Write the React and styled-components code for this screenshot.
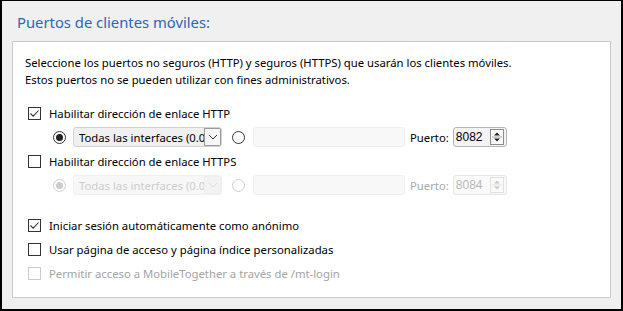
import React from "react";
import styled, { createGlobalStyle } from "styled-components";

const Global = createGlobalStyle`
  html, body { margin: 0; padding: 0; background: #f0f0f0; }
  body { font-family: "Noto Sans", "Open Sans", sans-serif; }
  * { box-sizing: border-box; }
`;

const Frame = styled.div`
  width: 623px;
  height: 311px;
  border: 2px solid #000;
  border-top-width: 1px;
  background: #f0f0f0;
  display: flex;
  flex-direction: column;
  padding: 0 10px 0 10px;
`;

const Title = styled.h1`
  margin: 0;
  padding: 10px 0 0 5px;
  height: 40px;
  font-size: 14.8px;
  font-weight: 400;
  color: #2a68b1;
  line-height: 22px;
`;

const Panel = styled.div`
  height: 257px;
  background: #fff;
  border: 1px solid #c9c9c9;
  padding: 12px 0 0 15px;
  display: flex;
  flex-direction: column;
  font-size: 11.3px;
  color: #000;
`;

const Desc = styled.p`
  margin: 0 0 13px -3px;
  line-height: 17px;
`;

const Row = styled.div`
  height: 24px;
  display: flex;
  align-items: center;
  padding-left: ${(p) => p.$indent || 0}px;
  margin-top: ${(p) => p.$gapTop || 0}px;
  color: ${(p) => (p.$disabled ? "#a3a3a3" : "#000")};
`;

const Box = styled.span`
  width: 13px;
  height: 13px;
  border: 1px solid ${(p) => (p.$disabled ? "#cccccc" : "#333")};
  background: #fff;
  display: inline-flex;
  align-items: center;
  justify-content: center;
  margin-right: 8px;
  flex: none;
`;

const Check = ({ checked, disabled }) => (
  <Box $disabled={disabled}>
    {checked && (
      <svg width="11" height="11" viewBox="0 0 11 11">
        <path d="M1.5 5.5 L4.2 8.2 L9.5 2.5" fill="none" stroke={disabled ? "#bbb" : "#333"} strokeWidth="1.1" />
      </svg>
    )}
  </Box>
);

const RadioRing = styled.span`
  width: 13px;
  height: 13px;
  border-radius: 50%;
  border: 1px solid ${(p) => (p.$disabled ? "#cfcfcf" : "#333")};
  background: #fff;
  display: inline-flex;
  align-items: center;
  justify-content: center;
  flex: none;
  margin-right: ${(p) => p.$mr}px;
`;

const Dot = styled.span`
  width: 7px;
  height: 7px;
  border-radius: 50%;
  background: ${(p) => (p.$disabled ? "#cccccc" : "#222")};
`;

const Radio = ({ checked, disabled, mr }) => (
  <RadioRing $disabled={disabled} $mr={mr}>
    {checked && <Dot $disabled={disabled} />}
  </RadioRing>
);

const Combo = styled.div`
  width: 149px;
  height: 20px;
  border: 1px solid ${(p) => (p.$disabled ? "#f0f0f0" : "#d2d2d2")};
  border-radius: 3px;
  background: ${(p) => (p.$disabled ? "#f7f7f7" : "#f0f0f0")};
  display: flex;
  align-items: center;
  margin-right: 10px;
  overflow: hidden;
  flex: none;
`;

const ComboText = styled.span`
  flex: 1;
  min-width: 0;
  padding-left: 5px;
  white-space: nowrap;
  overflow: hidden;
  color: ${(p) => (p.$disabled ? "#cdcdcd" : "#000")};
`;

const DropBtn = styled.span`
  width: 17px;
  height: 18px;
  flex: none;
  display: flex;
  align-items: center;
  justify-content: center;
  border: 1px solid ${(p) => (p.$disabled ? "#efefef" : "#9a9a9a")};
  background: ${(p) => (p.$disabled ? "#f3f3f3" : "#f6f6f6")};
`;

const TextInput = styled.div`
  width: 152px;
  height: 20px;
  border: 1px solid #f0f0f0;
  border-radius: 3px;
  background: #f8f8f8;
  margin-right: 5px;
  flex: none;
`;

const PortLabel = styled.span`
  margin-right: 4px;
  color: ${(p) => (p.$disabled ? "#a8a8a8" : "#000")};
`;

const Spin = styled.div`
  width: 54px;
  height: 20px;
  border: 1px solid ${(p) => (p.$disabled ? "#e6e6e6" : "#b5b5b5")};
  border-radius: 3px;
  background: ${(p) => (p.$disabled ? "#fafafa" : "#f3f3f3")};
  display: flex;
  align-items: center;
  padding: 0 2px 0 2px;
`;

const SpinText = styled.span`
  flex: 1;
  font-family: "Liberation Sans Narrow", "Liberation Sans", sans-serif;
  font-size: 12px;
  color: ${(p) => (p.$disabled ? "#b8b8b8" : "#000")};
`;

const SpinBtns = styled.span`
  width: 14px;
  height: 16px;
  border: 1px solid ${(p) => (p.$disabled ? "#e0e0e0" : "#8c8c8c")};
  background: #fafafa;
  display: flex;
  align-items: center;
  justify-content: center;
`;

const SpinArrows = ({ disabled }) => {
  const c = disabled ? "#c8c8c8" : "#222";
  return (
    <SpinBtns $disabled={disabled}>
      <svg width="12" height="14" viewBox="0 0 12 14">
        <path d="M3 5.5 L6 2.5 L9 5.5 Z" fill={c} />
        <line x1="1" y1="7" x2="11" y2="7" stroke={disabled ? "#e0e0e0" : "#aaa"} />
        <path d="M3 8.5 L6 11.5 L9 8.5 Z" fill={c} />
      </svg>
    </SpinBtns>
  );
};

const Chevron = ({ disabled }) => (
  <svg width="10" height="6" viewBox="0 0 10 6">
    <path d="M1 1 L5 5 L9 1" fill="none" stroke={disabled ? "#dcdcdc" : "#333"} strokeWidth="1" />
  </svg>
);

const BindRow = ({ disabled, port }) => (
  <Row $indent={25}>
    <Radio checked disabled={disabled} mr={7} />
    <Combo $disabled={disabled}>
      <ComboText $disabled={disabled}>Todas las interfaces (0.0.0.0)</ComboText>
      <DropBtn $disabled={disabled}>
        <Chevron disabled={disabled} />
      </DropBtn>
    </Combo>
    <Radio disabled={disabled} mr={8} />
    <TextInput />
    <PortLabel $disabled={disabled}>Puerto:</PortLabel>
    <Spin $disabled={disabled}>
      <SpinText $disabled={disabled}>{port}</SpinText>
      <SpinArrows disabled={disabled} />
    </Spin>
  </Row>
);

export default function App() {
  return (
    <>
      <Global />
      <Frame>
        <Title>Puertos de clientes móviles:</Title>
        <Panel>
          <Desc>
            Seleccione los puertos no seguros (HTTP) y seguros (HTTPS) que usarán los clientes móviles.
            <br />
            Estos puertos no se pueden utilizar con fines administrativos.
          </Desc>
          <Row>
            <Check checked />
            Habilitar dirección de enlace HTTP
          </Row>
          <BindRow port="8082" />
          <Row>
            <Check />
            Habilitar dirección de enlace HTTPS
          </Row>
          <BindRow disabled port="8084" />
          <Row $gapTop={16}>
            <Check checked />
            Iniciar sesión automáticamente como anónimo
          </Row>
          <Row>
            <Check />
            Usar página de acceso y página índice personalizadas
          </Row>
          <Row $disabled>
            <Check disabled />
            Permitir acceso a MobileTogether a través de /mt-login
          </Row>
        </Panel>
      </Frame>
    </>
  );
}
